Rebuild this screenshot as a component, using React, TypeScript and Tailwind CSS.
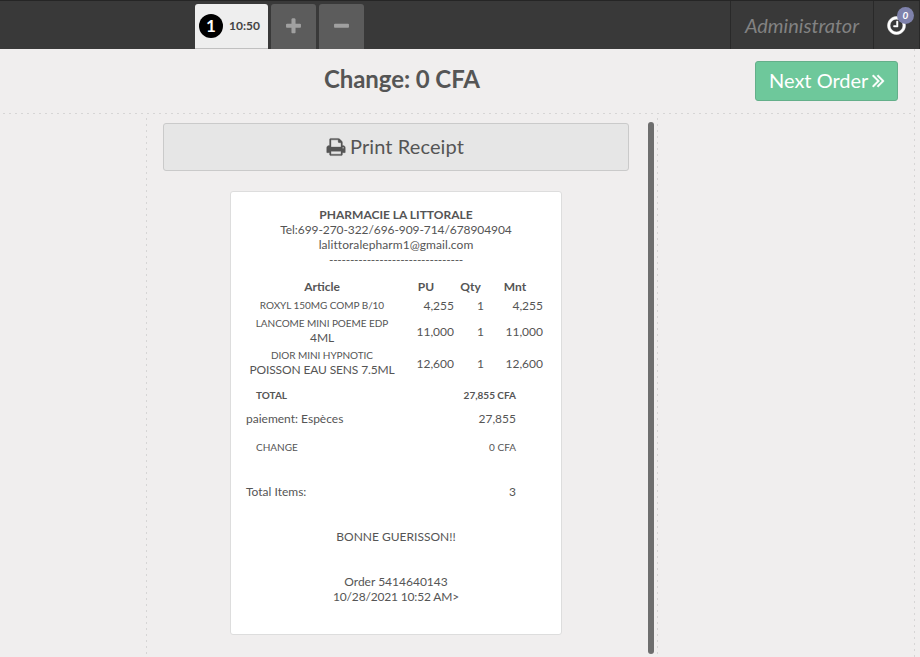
import React from "react";

const icons = {
  plus: "M1600 736v192q0 40-28 68t-68 28h-416v416q0 40-28 68t-68 28h-192q-40 0-68-28t-28-68v-416h-416q-40 0-68-28t-28-68v-192q0-40 28-68t68-28h416v-416q0-40 28-68t68-28h192q40 0 68 28t28 68v416h416q40 0 68 28t28 68z",
  minus: "M1600 736v192q0 40-28 68t-68 28h-1216q-40 0-68-28t-28-68v-192q0-40 28-68t68-28h1216q40 0 68 28t28 68z",
  clock: "M1024 544v448q0 14-9 23t-23 9h-320q-14 0-23-9t-9-23v-64q0-14 9-23t23-9h224v-352q0-14 9-23t23-9h64q14 0 23 9t9 23zm416 352q0-148-73-273t-198-198-273-73-273 73-198 198-73 273 73 273 198 198 273 73 273-73 198-198 73-273zm224 0q0 209-103 385.5t-279.5 279.5-385.5 103-385.5-103-279.5-279.5-103-385.5 103-385.5 279.5-279.5 385.5-103 385.5 103 279.5 279.5 103 385.5z",
  print: "M448 1536h896v-256h-896v256zm0-640h896v-384h-160q-40 0-68-28t-28-68v-160h-640v640zm1152 64q0-26-19-45t-45-19-45 19-19 45 19 45 45 19 45-19 19-45zm128 0v416q0 13-9.5 22.5t-22.5 9.5h-224v160q0 40-28 68t-68 28h-960q-40 0-68-28t-28-68v-160h-224q-13 0-22.5-9.5t-9.5-22.5v-416q0-79 56.5-135.5t135.5-56.5h64v-544q0-40 28-68t68-28h672q40 0 88 20t76 48l152 152q28 28 48 76t20 88v256h64q79 0 135.5 56.5t56.5 135.5z",
  next: "M979 960q0 13-10 23l-466 466q-10 10-23 10t-23-10l-50-50q-10-10-10-23t10-23l393-393-393-393q-10-10-10-23t10-23l50-50q10-10 23-10t23 10l466 466q10 10 10 23zm384 0q0 13-10 23l-466 466q-10 10-23 10t-23-10l-50-50q-10-10-10-23t10-23l393-393-393-393q-10-10-10-23t10-23l50-50q10-10 23-10t23 10l466 466q10 10 10 23z",
};

function Icon({ name, className, box = "0 0 1792 1792" }: { name: keyof typeof icons; className: string; box?: string }) {
  return (
    <svg viewBox={box} className={className} fill="currentColor">
      <path d={icons[name]} />
    </svg>
  );
}

const lines = [
  { name: ["ROXYL 150MG COMP B/10"], price: "4,255", qty: "1", total: "4,255", h: "h-[18px]", pad: "pt-0" },
  { name: ["LANCOME MINI POEME EDP", "4ML"], price: "11,000", qty: "1", total: "11,000", h: "h-[32px]", pad: "pt-[2px]" },
  { name: ["DIOR MINI HYPNOTIC", "POISSON EAU SENS 7.5ML"], price: "12,600", qty: "1", total: "12,600", h: "h-[32px]", pad: "pt-[2px]" },
];

const dashX = "h-px bg-[repeating-linear-gradient(90deg,transparent_0_3px,#d6d5d5_3px_5px,transparent_5px_6px)]";
const dashY = "w-px shrink-0 bg-[repeating-linear-gradient(180deg,#d6d5d5_0_2px,transparent_2px_6px)]";

function TopBar() {
  return (
    <header className="flex h-[49px] shrink-0 items-end border-t border-[#252525] bg-[#393939]">
      <div className="ml-[195px] flex h-[45px] gap-[3px]">
        <div className="flex w-[73px] items-center rounded-t-[3px] border-b border-[#c0c0c0] bg-[#eeeeee] pl-1">
          <span className="flex size-6 items-center justify-center rounded-full bg-black text-[17px] font-bold text-white">1</span>
          <span className="ml-[6px] text-[12px] font-bold text-[#444]">10:50</span>
        </div>
        <div className="flex w-[45px] items-center justify-center rounded-t-[3px] bg-[#5c5c5c] text-[#a0a0a0]">
          <Icon name="plus" className="size-[19px]" />
        </div>
        <div className="flex w-[45px] items-center justify-center rounded-t-[3px] bg-[#5c5c5c] text-[#a0a0a0]">
          <Icon name="minus" className="size-[19px]" />
        </div>
      </div>
      <div className="ml-auto flex h-12">
        <div className="flex w-[143px] items-center justify-center border-l border-[#292929] text-[20px] italic text-[#828282]">Administrator</div>
        <div className="relative flex w-[47px] items-center border-x border-[#292929] pl-[12px] text-white">
          <Icon name="clock" className="mt-px size-[21px] stroke-current stroke-[40]" />
          <span className="absolute left-[23px] top-[6px] flex size-[17px] items-center justify-center rounded-full bg-[#7f82ac] text-[10px] font-bold italic">0</span>
        </div>
      </div>
    </header>
  );
}

function Receipt() {
  return (
    <section className="mt-[20px] ml-[67px] h-[444px] w-[332px] rounded-[3px] border border-[#dddddd] bg-white px-[15px] pt-[15px] text-[12px] leading-[15px]">
      <div className="text-center">
        <div className="font-bold">PHARMACIE LA LITTORALE</div>
        <div className="tracking-[-0.08px]">Tel:699-270-322/696-909-714/678904904</div>
        <div className="tracking-[0.07px]">lalittoralepharm1@gmail.com</div>
        <div className="tracking-[-0.27px]">--------------------------------</div>
      </div>
      <table className="mt-[9px] w-[300px] table-fixed border-collapse">
        <colgroup>
          <col className="w-[152px]" />
          <col className="w-[56px]" />
          <col className="w-[33px]" />
          <col className="w-[59px]" />
        </colgroup>
        <thead>
          <tr className="h-[20px]">
            <th className="p-0">Article</th>
            <th className="p-0">PU</th>
            <th className="p-0">Qty</th>
            <th className="py-0 pl-0 pr-[3px]">Mnt</th>
          </tr>
        </thead>
        <tbody>
          {lines.map((l) => (
            <tr key={l.name[0]} className={l.h}>
              <td className="px-0 pb-0 pt-[2px] text-center align-top leading-[14px]">
                <div className="text-[10px] tracking-[-0.05px]">{l.name[0]}</div>
                {l.name[1] && <div className="-mb-px mt-px h-[14px] whitespace-nowrap tracking-[-0.13px]">{l.name[1]}</div>}
              </td>
              <td className={`px-0 pb-0 text-right ${l.pad}`}>{l.price}</td>
              <td className={`pb-0 pl-0 pr-[3px] text-right ${l.pad}`}>{l.qty}</td>
              <td className={`pb-0 pl-0 pr-[3px] text-right ${l.pad}`}>{l.total}</td>
            </tr>
          ))}
        </tbody>
      </table>
      <div className="w-[270px]">
        <div className="mt-[10px] flex justify-between pl-[10px] text-[10px] font-bold"><span>TOTAL</span><span>27,855 CFA</span></div>
        <div className="mt-[8px] flex justify-between"><span>paiement: Espèces</span><span>27,855</span></div>
        <div className="mt-[14px] flex justify-between pl-[10px] text-[10px]"><span>CHANGE</span><span>0 CFA</span></div>
        <div className="mt-[29px] flex justify-between"><span>Total Items:</span><span>3</span></div>
      </div>
      <div className="mt-[30px] text-center">
        <div>BONNE GUERISSON!!</div>
        <div className="mt-[30px]">Order 5414640143</div>
        <div className="tracking-[-0.17px]">10/28/2021 10:52 AM&gt;</div>
      </div>
    </section>
  );
}

export default function App() {
  return (
    <div className="flex h-[657px] w-[920px] flex-col overflow-hidden bg-[#f0eeee] font-['Lato',sans-serif] text-[#555555]">
      <TopBar />
      <div className="flex min-h-0 flex-1">
        <main className="flex w-[914px] shrink-0 flex-col">
          <div className="flex h-[64px] items-start">
            <h1 className="ml-[324px] mt-[12px] text-[24px] font-bold leading-[36px] tracking-[-0.08px]">Change: 0 CFA</h1>
            <button className="ml-auto mr-4 mt-[12px] flex h-10 w-[143px] items-center rounded-[3px] border border-[#64af8a] bg-[#6ec89b] pb-[2px] pl-[13px] text-[20px] text-white">
              Next Order
              <Icon name="next" className="ml-[4px] mt-px h-[22px] w-[13px] stroke-current stroke-[30]" box="384 64 1024 1792" />
            </button>
          </div>
          <div className={dashX} />
          <div className="flex min-h-0 flex-1">
            <div className="w-[146px] shrink-0" />
            <div className={`mt-1 ${dashY}`} />
            <div className="flex w-[501px] shrink-0 flex-col pl-4 pt-[9px]">
              <button className="flex h-12 w-[466px] shrink-0 items-center justify-center rounded-[3px] border border-[#cacaca] bg-[#e6e6e6] pb-[2px] pr-[2px] text-[20px] tracking-[0.1px]">
                <Icon name="print" className="mr-1 mt-[2px] size-5 stroke-current stroke-[30]" />
                Print Receipt
              </button>
              <Receipt />
            </div>
            <div className="mt-2 h-[532px] w-[6px] rounded-full bg-[#6e6e6e]" />
            <div className={`ml-[3px] mt-1 ${dashY}`} />
          </div>
        </main>
        <div className={dashY} />
      </div>
    </div>
  );
}
